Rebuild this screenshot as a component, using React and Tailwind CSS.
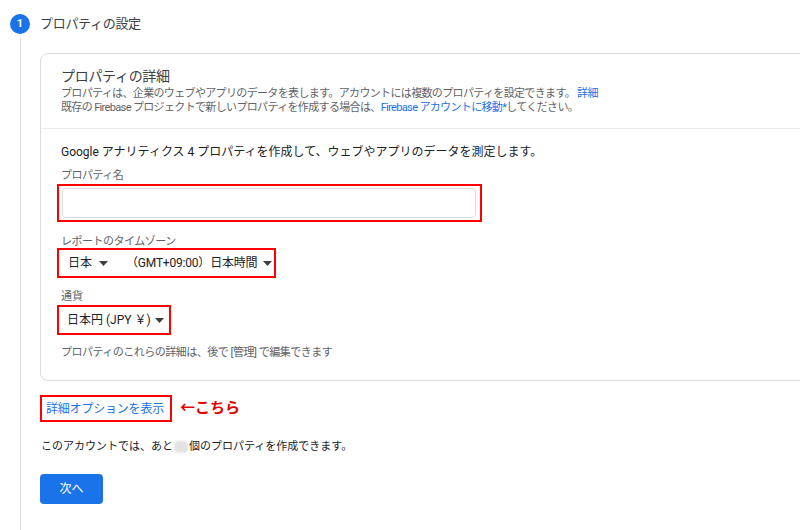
import React from "react";

const Caret = () => (
  <svg width="9" height="5" viewBox="0 0 9 5" className="shrink-0">
    <path d="M0 0 L9 0 L4.5 5 Z" fill="#3c4043" />
  </svg>
);

export default function App() {
  return (
    <div
      className="w-[800px] h-[530px] bg-white overflow-hidden relative"
      style={{ fontFamily: 'Roboto, "Noto Sans CJK JP", sans-serif' }}
    >
      <div className="flex items-center pt-[14px] pl-[10px] h-[34px]">
        <div className="w-[20px] h-[20px] rounded-full bg-[#1a73e8] text-white text-[11px] font-bold flex items-center justify-center">
          1
        </div>
        <div className="ml-[10px] text-[13px] text-[#3c4043] tracking-[-0.3px]">プロパティの設定</div>
      </div>
      <div className="flex">
        <div className="w-[40px] shrink-0 flex pt-[4px]">
          <div className="ml-[20px] w-px h-[500px] bg-[#dadce0]" />
        </div>
        <div className="flex-1">
          <div className="mt-[19px] w-[790px] border border-[#dadce0] rounded-lg">
            <div className="px-[20px] pt-[11px] pb-[13px] border-b border-[#e8eaed]">
              <div className="text-[14px] leading-[22px] text-[#3c4043] tracking-[-0.3px]">プロパティの詳細</div>
              <div className="text-[11px] leading-[14px] text-[#5f6368] tracking-[-0.65px]">
                プロパティは、企業のウェブやアプリのデータを表します。アカウントには複数のプロパティを設定できます。{" "}
                <span className="text-[#1a73e8]">詳細</span>
              </div>
              <div className="text-[11px] leading-[14px] text-[#5f6368] tracking-[-0.65px]">
                既存の Firebase プロジェクトで新しいプロパティを作成する場合は、
                <span className="text-[#1a73e8]">Firebase アカウントに移動*</span>
                してください。
              </div>
            </div>
            <div className="px-[20px] pt-[13px] pb-[20px]">
              <div className="text-[12px] leading-[20px] text-[#202124]">
                Google アナリティクス 4 プロパティを作成して、ウェブやアプリのデータを測定します。
              </div>
              <div className="mt-[7px] text-[11px] leading-[14px] text-[#5f6368] tracking-[-0.5px]">プロパティ名</div>
              <div className="-ml-[4px] mt-[1px] w-[425px] h-[38px] border-2 border-[#ff0000] pl-[3px] pr-[4px] py-[2px]">
                <div className="w-full h-full border border-[#dadce0] rounded-[4px]" />
              </div>
              <div className="mt-[13px] text-[11px] leading-[14px] text-[#5f6368] tracking-[-0.5px]">レポートのタイムゾーン</div>
              <div className="-ml-[4px] mt-[-1px] w-[219px] h-[30px] border-2 border-[#ff0000] flex items-center pl-[9px] text-[12px] text-[#202124]">
                <span>日本</span>
                <span className="ml-[7px]"><Caret /></span>
                <span className="ml-[18px] tracking-[-0.2px]">（GMT+09:00）日本時間</span>
                <span className="ml-[6px]"><Caret /></span>
              </div>
              <div className="mt-[12px] text-[11px] leading-[14px] text-[#5f6368]">通貨</div>
              <div className="-ml-[4px] mt-[1px] w-[114px] h-[30px] border-2 border-[#ff0000] flex items-center pl-[8px] text-[12px] text-[#202124]">
                <span>日本円 (JPY ￥)</span>
                <span className="ml-[4px]"><Caret /></span>
              </div>
              <div className="mt-[11px] text-[11px] leading-[14px] text-[#5f6368] tracking-[-0.5px]">
                プロパティのこれらの詳細は、後で [管理] で編集できます
              </div>
            </div>
          </div>
          <div className="mt-[14px] flex items-center">
            <div className="h-[27px] w-[132px] border-2 border-[#ff0000] flex items-center pl-[4px] text-[12px] text-[#1a73e8] tracking-[-0.2px]">
              詳細オプションを表示
            </div>
            <div className="ml-[8px] text-[15px] font-bold text-[#e50000]">←こちら</div>
          </div>
          <div className="mt-[15px] ml-[1px] text-[11px] leading-[20px] text-[#202124] flex items-center">
            <span>このアカウントでは、あと</span>
            <span className="inline-block w-[14px] h-[12px] mx-[1px] bg-[#e3e3e3] rounded-sm blur-[1px]" />
            <span>個のプロパティを作成できます。</span>
          </div>
          <div className="mt-[17px] w-[63px] h-[30px] rounded-[4px] bg-[#1a73e8] text-white text-[12px] flex items-center justify-center">
            次へ
          </div>
        </div>
      </div>
    </div>
  );
}
